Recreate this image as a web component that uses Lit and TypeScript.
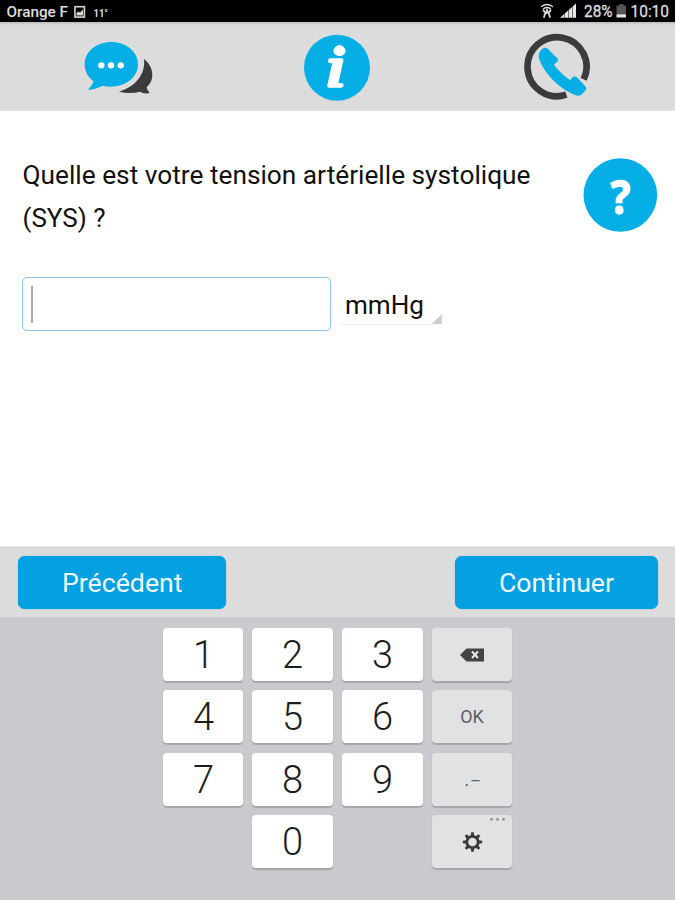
import { LitElement, html, svg, css } from "lit";
import { customElement } from "lit/decorators.js";

@customElement("status-bar")
class StatusBar extends LitElement {
  static styles = css`
    :host { display: block; height: 22px; background: #000; }
    svg { display: block; }
    text { font-family: Roboto, sans-serif; fill: #dedede; }
    .carrier { font-size: 14.5px; font-weight: 500; }
    .temp { font-size: 11px; font-weight: 700; }
    .num { font-size: 16.5px; stroke: #dedede; stroke-width: .3px; }
  `;
  render() {
    return html`<svg width="675" height="22" viewBox="0 0 675 22">
      <text class="carrier" x="6.5" y="16.5" textLength="61.5" lengthAdjust="spacingAndGlyphs">Orange F</text>
      <rect x="75" y="6.7" width="9.4" height="10.4" fill="none" stroke="#d8d8d8" stroke-width="1.6" />
      <path d="M76.5 15.5V13l2-1.5 1.5 1 3-3v6z" fill="#d8d8d8" />
      <text class="temp" x="93.5" y="16.5" textLength="14.5" lengthAdjust="spacingAndGlyphs">11°</text>
      <g fill="none" stroke="#dcdcdc" stroke-linecap="round">
        <path d="M541.5 6.500Q547 2.500 552.500 6.500" stroke-width="1.300" />
        <path d="M543.500 8.800Q547 6.300 550.500 8.800" stroke-width="1.500" />
        <path d="M547 9.500V13M544 17L545.500 12.500H548.500L550 17M543.500 10.500L545.500 12.500M550.500 10.500L548.500 12.500" stroke-width="1.800" />
      </g>
      <path d="M560 17.800L576 3.500V17.800z" fill="#e6e6e6" />
      <path d="M564.500 10V18M568.500 7V18M572.500 4V18" stroke="#000" stroke-width=".5" />
      <text class="num" x="584" y="17.300" textLength="28.500" lengthAdjust="spacingAndGlyphs">28%</text>
      <path d="M619.500 4h4v1.500h2.500v9h-9.500v-9h3z" fill="#555" />
      <path d="M616.500 14.300h9.500v3.200h-9.500z" fill="#e6e6e6" />
      <text class="num" x="630.500" y="17.300" textLength="38.500" lengthAdjust="spacingAndGlyphs">10:10</text>
    </svg>`;
  }
}

@customElement("tool-bar")
class ToolBar extends LitElement {
  static styles = css`
    :host {
      display: grid; grid-template-columns: 74px 70px 70px; column-gap: 146px; height: 89px; box-sizing: border-box;
      padding: 10px 0 0 82px;
      background: linear-gradient(#bdbdbd 0, #dadada 3px, #dcdcdc 8px, #dcdcdc 87px, #e4e4e4 89px);
    }
    .phone { margin-left: 4px; }
    svg { display: block; }
    .info { font: italic 56px "Liberation Serif", serif; fill: #fff; stroke: #fff; stroke-width: 3.6px; stroke-linejoin: round; }
  `;
  render() {
    return html`
      <svg width="74" height="70" viewBox="246 96 222 210">
        <path fill="#3b3b3d" d="M432 177C449 190 457 208 457 225C457 240 451 251 440 262Q442 272 449 279Q433 283 420 275Q390 283 357 275C384 267 403 254 417 235C430 217 434 199 432 177z" />
        <path fill="#05aee4" d="M334 126C379 126 414 155 414 193C414 231 379 260 334 260Q318 260 306 257Q288 268 264 269Q277 257 281 244C263 232 254 213 254 193C254 155 289 126 334 126z" />
        <g fill="#fff"><circle cx="304" cy="196" r="9.500" /><circle cx="333" cy="196" r="9.500" /><circle cx="362" cy="196" r="9.500" /></g>
      </svg>
      <svg width="70" height="70" viewBox="302 32 70 70">
        <circle cx="337" cy="67.700" r="33" fill="#05aee4" />
        <circle cx="339.500" cy="50.500" r="5.400" fill="#fff" />
        <text class="info" x="325.500" y="86" textLength="20" lengthAdjust="spacingAndGlyphs">i</text>
      </svg>
      <svg class="phone" width="70" height="70" viewBox="66 96 210 210">
        <path d="M251 238A88.500 88.500 0 1 0 199 284" fill="none" stroke="#3b3b3d" stroke-width="20" />
        <path fill="#05aee4" d="M129 145Q137 140 144 147L171 174Q177 180 172 185L162 193C165 203 200 236 211 240L218 232Q223 227 230 231L257 260Q261 265 257 271L247 282Q241 288 232 287C188 275 134 225 118 178C114 165 117 155 129 145z" />
      </svg>`;
  }
}

@customElement("question-panel")
class QuestionPanel extends LitElement {
  static styles = css`
    :host {
      display: block; height: 435px; box-sizing: border-box; padding: 42px 17px 0 22px;
      background: #fff; font-family: Roboto, sans-serif; color: #111;
    }
    .question { display: flex; justify-content: space-between; }
    svg { display: block; }
    .line { font-size: 26px; fill: #111; }
    .help { margin: 5px 1px 0 0; }
    .mark { font: 700 46.500px "Open Sans", sans-serif; fill: #fff; stroke: #fff; stroke-width: 1.300px; }
    .entry { display: flex; margin-top: 34px; }
    .field {
      width: 309px; height: 54px; box-sizing: border-box; border: 1.500px solid #8fc3e8;
      border-radius: 5px; padding: 8px 0 0 8px;
    }
    .caret { width: 1.500px; height: 37px; background: #aaa; }
    .unit { margin-left: 9px; }
  `;
  render() {
    return html`
      <div class="question">
        <svg width="520" height="90" viewBox="22 153 520 90">
          <text class="line" x="22.500" y="183.500" textLength="508" lengthAdjust="spacingAndGlyphs">Quelle est votre tension artérielle systolique</text>
          <text class="line" x="22.500" y="227" textLength="83" lengthAdjust="spacingAndGlyphs">(SYS) ?</text>
        </svg>
        <svg class="help" width="74" height="74" viewBox="0 0 74 74">
          <circle cx="37.300" cy="37" r="36.800" fill="#05aee4" />
          <text class="mark" x="27.500" y="55.500" textLength="20" lengthAdjust="spacingAndGlyphs">?</text>
        </svg>
      </div>
      <div class="entry">
        <div class="field"><div class="caret"></div></div>
        <svg class="unit" width="104" height="54" viewBox="340 277 104 54">
          <text class="line" x="345" y="313.500" textLength="79" lengthAdjust="spacingAndGlyphs">mmHg</text>
          <path d="M340 324.500H432" stroke="#eee" />
          <path d="M442 314V324H431.500z" fill="#cfcfcf" />
        </svg>
      </div>`;
  }
}

@customElement("nav-footer")
class NavFooter extends LitElement {
  static styles = css`
    :host {
      display: flex; justify-content: space-between; height: 71px; box-sizing: border-box;
      padding: 10px 17px 0 18px; background: #dcdcdc; border-top: 1px solid #e8e8e8;
    }
    .button {
      height: 53px; margin-top: -1px; border: 0; border-radius: 7px; padding: 0; background: #03a0e2;
      box-shadow: 0 0 1px #2b9bcf;
    }
    .previous { width: 208px; }
    .next { width: 203px; }
    svg { display: block; }
    text { font: 26px Roboto, sans-serif; fill: #f2faff; }
  `;
  render() {
    return html`
      <button class="button previous"><svg width="208" height="53"><text x="44" y="36" textLength="120.500" lengthAdjust="spacingAndGlyphs">Précédent</text></svg></button>
      <button class="button next"><svg width="203" height="53"><text x="44" y="36" textLength="115" lengthAdjust="spacingAndGlyphs">Continuer</text></svg></button>`;
  }
}

const backspace = svg`<path d="M28 27L34.500 20.500H52V33.500H34.500z" fill="#444"/><path d="M40 23.500L46 30M46 23.500L40 30" stroke="#e8e8e8" stroke-width="2"/>`;
const gear = svg`
  <circle cx="40.500" cy="27" r="5.700" fill="none" stroke="#3c3c3c" stroke-width="2.800"/>
  ${[0, 45, 90, 135, 180, 225, 270, 315].map((a) => svg`<path d="M39.200 17.300H41.800L42.200 21H38.800z" fill="#3c3c3c" transform="rotate(${a} 40.5 27)"/>`)}
  <g fill="#999"><circle cx="59.500" cy="4.200" r="1.500"/><circle cx="65.500" cy="4.200" r="1.500"/><circle cx="71.500" cy="4.200" r="1.500"/></g>`;

@customElement("key-pad")
class KeyPad extends LitElement {
  static styles = css`
    :host {
      display: grid; grid-template-columns: repeat(4, 80.500px); grid-auto-rows: 53px;
      column-gap: 9.200px; row-gap: 9.300px; justify-content: center; height: 283px;
      box-sizing: border-box; padding-top: 11px; background: #c9cace;
    }
    .key { border-radius: 4px; background: #fff; box-shadow: 0 1.500px 1px #a5a6aa; }
    .soft { background: #e1e2e4; }
    svg { display: block; width: 80.500px; height: 53px; }
    text { text-anchor: middle; font-family: Roboto, sans-serif; }
    .digit { font-size: 38px; font-weight: 300; fill: #1c1c1c; }
    .ok { font-size: 19px; fill: #606060; }
  `;
  render() {
    const digit = (d: string) => svg`<text class="digit" x="40.500" y="40">${d}</text>`;
    const ok = svg`<text class="ok" x="40" y="33.200" textLength="23.500" lengthAdjust="spacingAndGlyphs">OK</text>`;
    const punct = svg`<text class="ok" x="34.800" y="33">.</text><text class="ok" x="43.500" y="32.500" textLength="9.500" lengthAdjust="spacingAndGlyphs">-</text>`;
    const keys = [
      digit("1"), digit("2"), digit("3"), backspace,
      digit("4"), digit("5"), digit("6"), ok,
      digit("7"), digit("8"), digit("9"), punct,
      null, digit("0"), null, gear,
    ];
    return keys.map((k, i) =>
      k ? html`<div class="key ${i % 4 === 3 ? "soft" : ""}"><svg viewBox="0 0 80.5 53">${k}</svg></div>` : html`<div></div>`
    );
  }
}

@customElement("app-root")
class AppRoot extends LitElement {
  static styles = css`
    :host { display: block; width: 675px; height: 900px; overflow: hidden; }
  `;
  render() {
    return html`
      <status-bar></status-bar>
      <tool-bar></tool-bar>
      <question-panel></question-panel>
      <nav-footer></nav-footer>
      <key-pad></key-pad>`;
  }
}
